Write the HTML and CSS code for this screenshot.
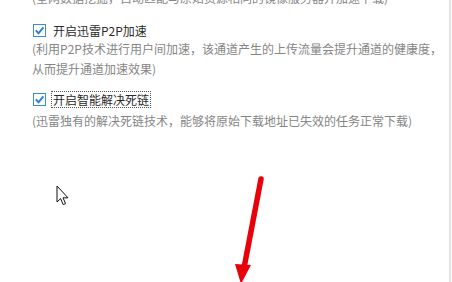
FILE: index.html
```html
<!DOCTYPE html>
<html lang="zh">
<head>
<meta charset="utf-8">
<link rel="stylesheet" href="styles.css">
</head>
<body>
<div class="panel">
  <div class="settings">
    <p class="desc cut">(全网数据挖掘，自动匹配与原始资源相同的镜像服务器并加速下载)</p>
    <div class="option">
      <label class="check">
        <span class="box"><svg viewBox="0 0 13 13" width="13" height="13"><path d="M2.8 6.4 L5.5 9.3 L10.4 3.4" fill="none" stroke="#2a7fd4" stroke-width="2"/></svg></span>
        <span class="label">开启迅雷P2P加速</span>
      </label>
      <p class="desc">(利用P2P技术进行用户间加速，该通道产生的上传流量会提升通道的健康度，<br>从而提升通道加速效果)</p>
    </div>
    <div class="option">
      <label class="check">
        <span class="box"><svg viewBox="0 0 13 13" width="13" height="13"><path d="M2.8 6.4 L5.5 9.3 L10.4 3.4" fill="none" stroke="#2a7fd4" stroke-width="2"/></svg></span>
        <span class="label focus">开启智能解决死链</span>
      </label>
      <p class="desc">(迅雷独有的解决死链技术，能够将原始下载地址已失效的任务正常下载)</p>
    </div>
  </div>
  <svg class="cursor" width="14" height="22" viewBox="0 0 14 22"><path d="M1 1 L1 17 L4.6 13.6 L7.2 19.6 L9.6 18.6 L7 12.8 L12 12.8 Z" fill="#fff" stroke="#111" stroke-width="1"/></svg>
  <svg class="arrow" width="40" height="110" viewBox="0 0 40 110"><path d="M30 7 L13 96" stroke="#e8000b" stroke-width="5.5" stroke-linecap="round" fill="none"/><path d="M4 92 L20 93 L10 112 Z" fill="#e8000b"/></svg>
</div>
</body>
</html>
```
FILE: styles.css
```css
html, body {
  margin: 0;
  padding: 0;
  background: #fff;
  overflow: hidden;
}
.panel {
  position: relative;
  width: 449px;
  height: 282px;
  border-right: 2px solid #e4e4e4;
  background: #fff;
  font-family: "Microsoft YaHei", "Noto Sans CJK SC", sans-serif;
  font-size: 12px;
}
.settings {
  padding-left: 32px;
  display: flex;
  flex-direction: column;
}
.desc {
  margin: 0;
  color: #858585;
  line-height: 20px;
  white-space: nowrap;
}
.cut {
  margin-top: -12px;
}
.option {
  margin-top: 14px;
  display: flex;
  flex-direction: column;
}
.option + .option {
  margin-top: 12px;
}
.check {
  display: flex;
  align-items: center;
  gap: 5px;
  height: 17px;
  margin-left: 1px;
}
.option + .option .check {
  margin-bottom: 3px;
}
.box {
  width: 11px;
  height: 11px;
  border: 1px solid #3b8ddb;
  position: relative;
}
.box svg {
  position: absolute;
  left: -1px;
  top: -1px;
}
.label {
  color: #2a2a2a;
  line-height: 15px;
  padding: 0 1px;
  border: 1px dotted transparent;
}
.focus {
  border-color: #555;
}
.cursor {
  position: absolute;
  left: 56px;
  top: 185px;
}
.arrow {
  position: absolute;
  left: 231px;
  top: 172px;
}
```
